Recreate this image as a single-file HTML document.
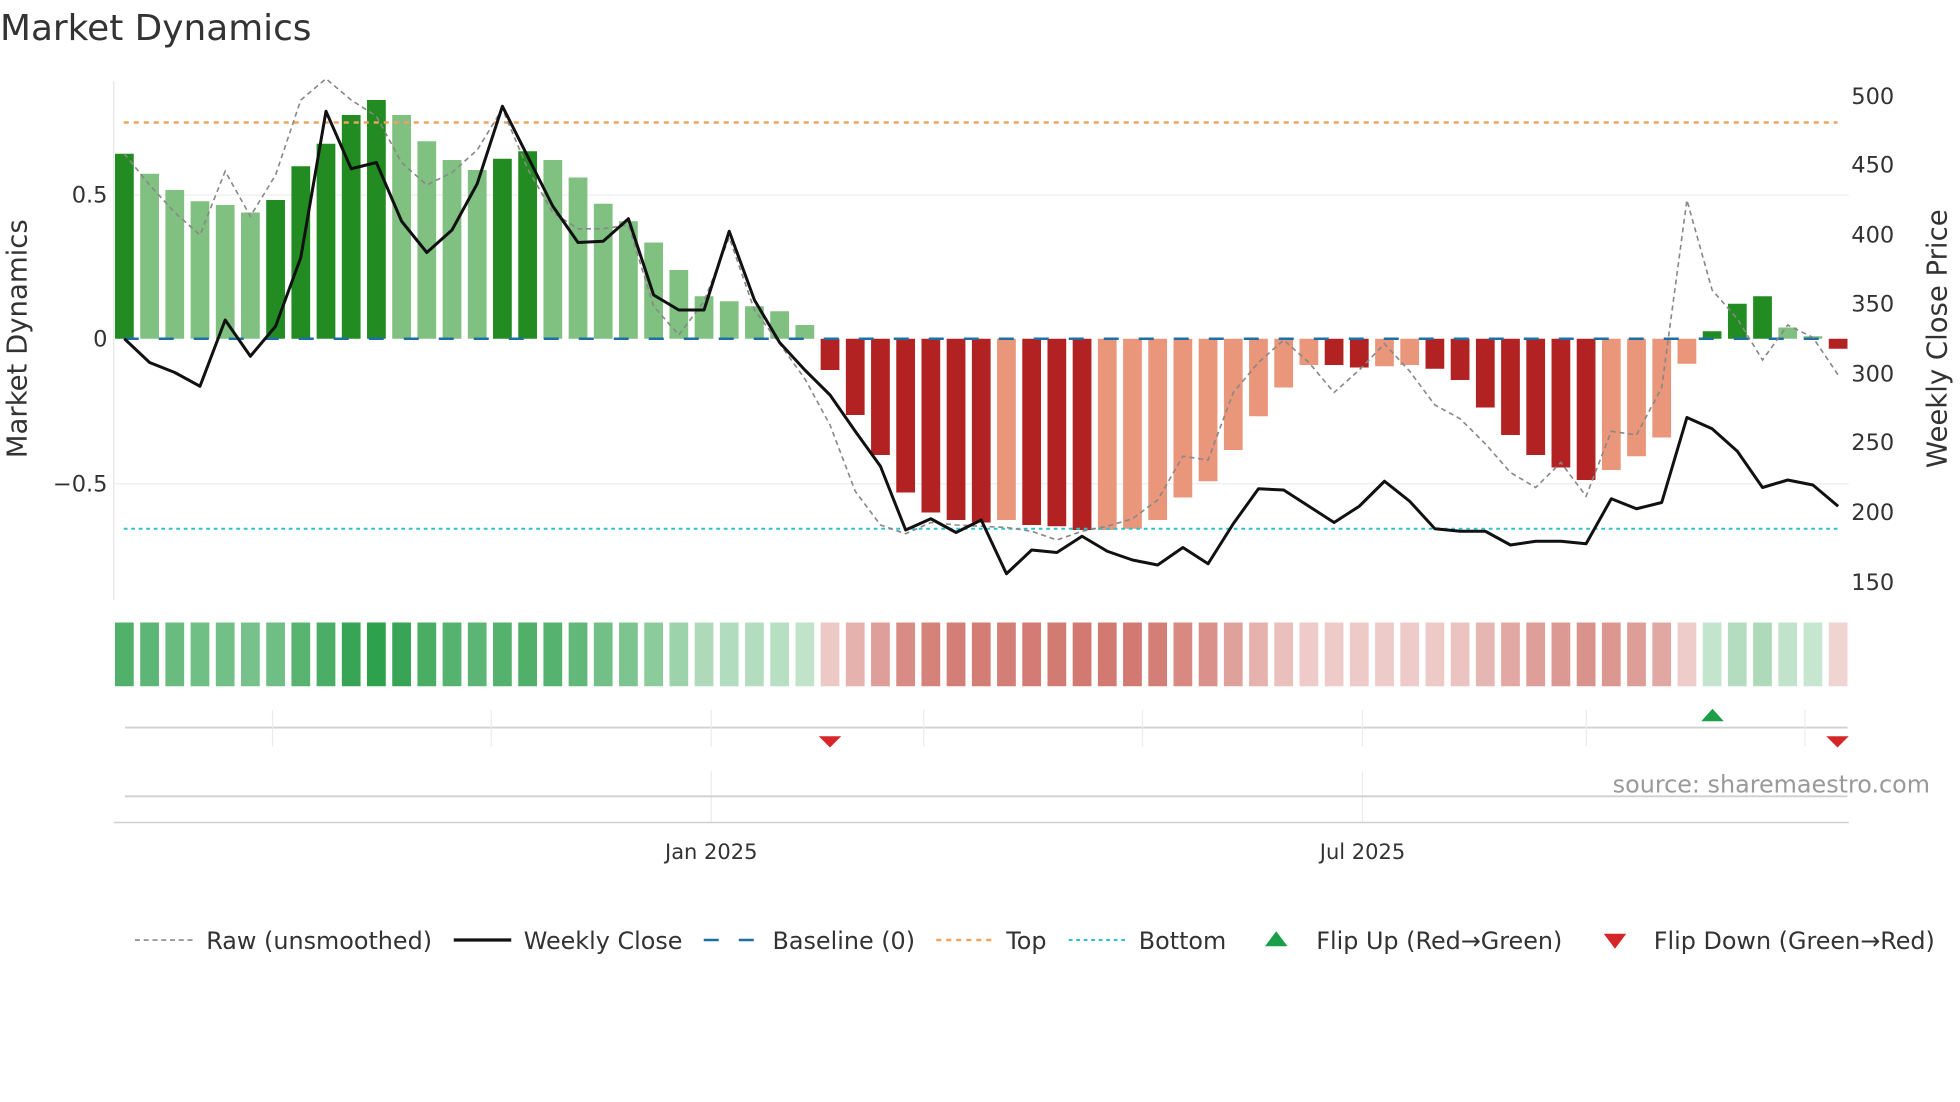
<!DOCTYPE html>
<html><head><meta charset="utf-8"><style>
html,body{margin:0;padding:0;background:#fff;}
svg{display:block;font-family:"DejaVu Sans","Liberation Sans",sans-serif;}
</style></head><body>
<svg id="s" width="1960" height="1102" viewBox="0 0 1568 881.6" xmlns="http://www.w3.org/2000/svg">
<text x="0" y="32" font-size="28.7" fill="#333">Market Dynamics</text>
<line x1="91" y1="156" x2="1479" y2="156" stroke="#eee" stroke-width="1"/>
<line x1="91" y1="387" x2="1479" y2="387" stroke="#eee" stroke-width="1"/>
<line x1="91" y1="65" x2="91" y2="480" stroke="#e6e6e6" stroke-width="1"/>
<g id="bars"></g>
<line x1="99" y1="98" x2="1470" y2="98" stroke="#f0a35e" stroke-width="2" stroke-dasharray="4,4"/>
<line x1="99" y1="423" x2="1470" y2="423" stroke="#2bc3d4" stroke-width="1.6" stroke-dasharray="3,3"/>
<line x1="99" y1="271" x2="1470" y2="271" stroke="#1f6fa4" stroke-width="2" stroke-dasharray="12,16"/>
<polyline id="raw" fill="none" stroke="#888" stroke-width="1.3" stroke-dasharray="4,3"/>
<polyline id="close" fill="none" stroke="#111" stroke-width="2.4" stroke-linejoin="round"/>
<g font-size="18" fill="#333">
<text x="86" y="162" text-anchor="end">0.5</text>
<text x="86" y="277" text-anchor="end">0</text>
<text x="86" y="393" text-anchor="end">−0.5</text>
<text x="1481" y="83">500</text><text x="1481" y="138">450</text><text x="1481" y="194">400</text>
<text x="1481" y="249">350</text><text x="1481" y="305">300</text><text x="1481" y="360">250</text>
<text x="1481" y="416">200</text><text x="1481" y="472">150</text>
</g>
<text transform="translate(21,271) rotate(-90)" text-anchor="middle" font-size="22" fill="#333">Market Dynamics</text>
<text transform="translate(1557,271) rotate(-90)" text-anchor="middle" font-size="22" fill="#333">Weekly Close Price</text>
<g id="strip"></g>
<line x1="100" y1="582" x2="1478" y2="582" stroke="#d0d0d0" stroke-width="1.5"/>
<g stroke="#ececec" stroke-width="1">
<line x1="218" y1="568" x2="218" y2="597"/><line x1="393" y1="568" x2="393" y2="597"/>
<line x1="569" y1="568" x2="569" y2="597"/><line x1="739" y1="568" x2="739" y2="597"/>
<line x1="914" y1="568" x2="914" y2="597"/><line x1="1090" y1="568" x2="1090" y2="597"/>
<line x1="1269" y1="568" x2="1269" y2="597"/><line x1="1444" y1="568" x2="1444" y2="597"/>
<line x1="569" y1="617" x2="569" y2="658"/><line x1="1090" y1="617" x2="1090" y2="658"/>
</g>
<polygon points="655,589 673,589 664,598" fill="#d62728"/>
<polygon points="1461,589 1479,589 1470,598" fill="#d62728"/>
<polygon points="1361,577 1379,577 1370,567" fill="#1a9e48"/>
<line x1="100" y1="637" x2="1478" y2="637" stroke="#d0d0d0" stroke-width="1.5"/>
<line x1="91" y1="658" x2="1479" y2="658" stroke="#d0d0d0" stroke-width="1.2"/>
<text x="569" y="687" text-anchor="middle" font-size="16.8" fill="#333">Jan 2025</text>
<text x="1090" y="687" text-anchor="middle" font-size="16.8" fill="#333">Jul 2025</text>
<text x="1544" y="634" text-anchor="end" font-size="19.1" fill="#999">source: sharemaestro.com</text>
<g font-size="19.1" fill="#333">
<line x1="108" y1="752" x2="154" y2="752" stroke="#888" stroke-width="1.3" stroke-dasharray="4,3"/>
<text x="165" y="759">Raw (unsmoothed)</text>
<line x1="363" y1="752" x2="409" y2="752" stroke="#111" stroke-width="2.6"/>
<text x="419" y="759">Weekly Close</text>
<line x1="563" y1="752" x2="609" y2="752" stroke="#1f6fa4" stroke-width="2" stroke-dasharray="12,16"/>
<text x="618" y="759">Baseline (0)</text>
<line x1="749" y1="752" x2="795" y2="752" stroke="#f0a35e" stroke-width="2" stroke-dasharray="4,4"/>
<text x="805" y="759">Top</text>
<line x1="855" y1="752" x2="901" y2="752" stroke="#2bc3d4" stroke-width="1.6" stroke-dasharray="3,3"/>
<text x="911" y="759">Bottom</text>
<polygon points="1012,757 1030,757 1021,745" fill="#1a9e48"/>
<text x="1053" y="759">Flip Up (Red→Green)</text>
<polygon points="1283,747 1301,747 1292,759" fill="#d62728"/>
<text x="1323" y="759">Flip Down (Green→Red)</text>
</g>
</svg>
<script>
var ns="http://www.w3.org/2000/svg";
var tops=[123,139,152,161,164,170,160,133,115,92,80,92,113,128,136,127,121,128,142,163,177,194,216,237,241,245,249,260,296,332,364,394,410,416,418,416,420,421,424,424,423,416,398,385,360,333,310,292,292,294,293,292,295,304,326,348,364,374,384,376,365,350,291,265,243,237,262,268,279];
var dark=[1,0,0,0,0,0,1,1,1,1,1,0,0,0,0,1,1,0,0,0,0,0,0,0,0,0,0,0,1,1,1,1,1,1,1,0,1,1,1,0,0,0,0,0,0,0,0,0,1,1,0,0,1,1,1,1,1,1,1,0,0,0,0,1,1,1,0,0,1];
var close=[271,290,298,309,256,285,261,206,89,135,130,177,202,184,147,85,125,165,194,193,175,236,248,248,185,240,274,296,316,345,373,424,415,426,416,459,440,442,429,441,448,452,438,451,419,391,392,405,418,405,385,401,423,425,425,436,433,433,435,399,407,402,334,343,361,390,384,388,405];
var raw=[123,148,170,188,137,173,140,80,63,80,93,130,148,138,120,87,135,170,183,183,180,245,268,241,190,248,275,303,340,393,420,427,418,420,421,422,425,432,425,421,415,400,365,368,314,290,272,290,314,296,275,297,324,335,355,378,390,370,397,345,348,310,160,232,255,288,260,270,300];
var bars=document.getElementById('bars'),strip=document.getElementById('strip');
var sp=(1470.5-99.5)/68,cp=[],rp=[];
function mix(c,t){return 'rgb('+c.map(function(v){return Math.round(255-(255-v)*t)}).join(',')+')';}
for(var i=0;i<69;i++){
 var cx=99.5+sp*i,t=tops[i],pos=t<271;
 if(i==67){t=269;pos=true;}
 var r=document.createElementNS(ns,'rect');
 r.setAttribute('x',cx-7.5);r.setAttribute('width',15);
 r.setAttribute('y',Math.min(t,271));r.setAttribute('height',Math.max(Math.abs(t-271),1));
 r.setAttribute('fill',pos?(dark[i]?'#228b22':'#80c080'):(dark[i]?'#b22222':'#e9967a'));
 bars.appendChild(r);
 var v=Math.abs(tops[i]-271)/230;
 var s=document.createElementNS(ns,'rect');
 s.setAttribute('x',cx-7.5);s.setAttribute('width',15);s.setAttribute('y',498);s.setAttribute('height',51);
 var tt=pos?0.25+0.72*v/0.83:0.22+0.55*v/0.67;
 s.setAttribute('fill',pos?mix([40,158,72],tt):mix([196,80,70],tt));
 strip.appendChild(s);
 cp.push(cx+','+close[i]);rp.push(cx+','+raw[i]);
}
document.getElementById('close').setAttribute('points',cp.join(' '));
document.getElementById('raw').setAttribute('points',rp.join(' '));
</script>
</body></html>
